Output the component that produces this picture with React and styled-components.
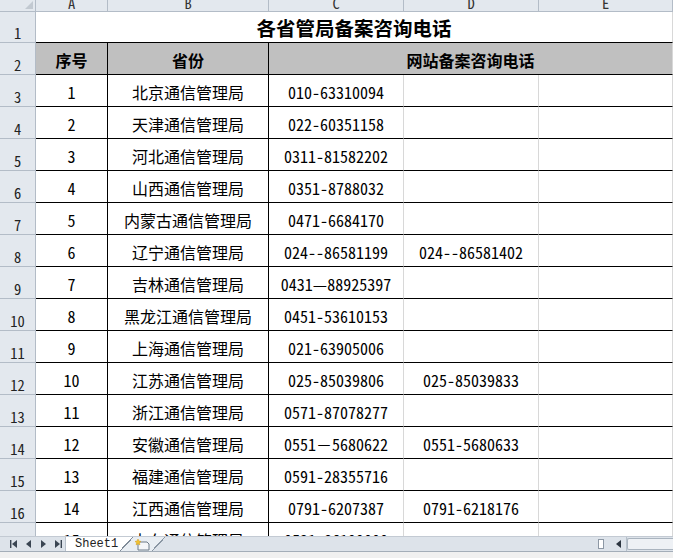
import React from 'react';
import styled, { createGlobalStyle } from 'styled-components';

const Global = createGlobalStyle`
  html, body { margin: 0; padding: 0; background: #fff; }
  body { font-family: "Noto Sans Mono CJK SC", "Noto Sans CJK SC", monospace; color: #000; }
  * { box-sizing: border-box; }
`;

const HEAD_BG = '#e3e8ee';
const HEAD_LINE = '#b3bcc7';
const GRID = '#d8d8d8';
const NEWTAB_BG = '#e9eef3';

const Window = styled.div`
  width: 673px;
  height: 558px;
  display: flex;
  flex-direction: column;
  overflow: hidden;
  background: #fff;
`;

const Sheet = styled.div`
  flex: 0 0 536px;
  overflow: hidden;
  display: grid;
  grid-template-columns: 36px 72px 161px 135px 135px 134px;
  grid-template-rows: 12px 31px;
  grid-auto-rows: 32px;
  align-content: start;
`;

const Corner = styled.div`
  background: ${HEAD_BG};
  border-right: 1px solid ${HEAD_LINE};
  border-bottom: 1px solid ${HEAD_LINE};
  display: flex;
  justify-content: flex-end;
  align-items: flex-end;
  padding: 0 2px 2px 0;
  &::after {
    content: '';
    width: 0;
    height: 0;
    border-left: 8px solid transparent;
    border-bottom: 8px solid #c2c9d1;
  }
`;

const ColHead = styled.div`
  background: ${HEAD_BG};
  border-right: 1px solid ${HEAD_LINE};
  border-bottom: 1px solid ${HEAD_LINE};
  overflow: hidden;
  display: flex;
  justify-content: center;
  align-items: flex-end;
  font-size: 14.5px;
  line-height: 14px;
  color: #333;
  padding-bottom: 1px;
`;

const RowHead = styled.div`
  background: ${HEAD_BG};
  border-right: 1px solid ${HEAD_LINE};
  border-bottom: 1px solid ${HEAD_LINE};
  display: flex;
  justify-content: center;
  align-items: flex-end;
  font-size: 14.5px;
  line-height: 16px;
  color: #222;
  padding-bottom: 1px;
`;

const Cell = styled.div`
  grid-column: span ${(p) => p.$span || 1};
  border-right: 1px solid ${(p) => (p.$strong ? '#000' : GRID)};
  border-bottom: 1px solid #000;
  background: ${(p) => (p.$head ? '#c0c0c0' : '#fff')};
  display: flex;
  justify-content: center;
  align-items: center;
  padding-top: 2px;
  white-space: nowrap;
  font-size: ${(p) => (p.$title ? '19.5px' : '16px')};
  font-weight: ${(p) => (p.$head || p.$title ? 700 : 400)};
  font-family: ${(p) => (p.$head || p.$title ? '"Noto Sans CJK SC", sans-serif' : 'inherit')};
  line-height: 20px;
`;

const TabBar = styled.div`
  flex: 0 0 16px;
  display: flex;
  align-items: stretch;
  background: #dde3ea;
  border-top: 1px solid #c3cad3;
  border-bottom: 1px solid #a3adb8;
`;

const Nav = styled.div`
  width: 66px;
  display: flex;
  align-items: center;
  gap: 6px;
  padding-left: 9px;
  border-right: 1px solid #b8c1cb;
`;

const NavBtn = styled.svg`
  width: 9px;
  height: 8px;
  fill: #3a4552;
`;

const SheetTab = styled.div`
  width: 67px;
  display: flex;
  align-items: center;
  padding-left: 9px;
  font-family: "Liberation Mono", monospace;
  font-size: 12px;
  color: #222;
  background:
    linear-gradient(to top left, ${NEWTAB_BG} calc(50% - 0.6px), #7f8b98 calc(50% - 0.6px), #7f8b98 calc(50% + 0.6px), #fff calc(50% + 0.6px)) right / 13px 100% no-repeat,
    linear-gradient(#fff, #fff) left / 54px 100% no-repeat;
`;

const NewTab = styled.div`
  width: 32px;
  display: flex;
  align-items: center;
  padding-left: 1px;
  background:
    linear-gradient(to top left, transparent calc(50% - 0.6px), #8a96a3 calc(50% - 0.6px), #8a96a3 calc(50% + 0.6px), ${NEWTAB_BG} calc(50% + 0.6px)) right / 13px 100% no-repeat,
    linear-gradient(${NEWTAB_BG}, ${NEWTAB_BG}) left / 19px 100% no-repeat;
`;

const Spacer = styled.div`
  flex: 1;
`;

const Splitter = styled.div`
  width: 6px;
  margin: 2px 6px 2px 0;
  background: #fff;
  border: 1px solid #8d98a5;
`;

const ScrollBtn = styled.div`
  width: 17px;
  display: flex;
  align-items: center;
  justify-content: center;
  border-right: 1px solid #b6c0ca;
`;

const Track = styled.div`
  width: 46px;
  margin: 1px 0;
  background: #eef1f5;
  border: 1px solid #aab4bf;
  border-right: none;
  border-radius: 2px 0 0 2px;
`;

const Footer = styled.div`
  flex: 1;
  background: #f0f0f0;
`;

const rows = [
  [1, '北京通信管理局', '010-63310094', ''],
  [2, '天津通信管理局', '022-60351158', ''],
  [3, '河北通信管理局', '0311-81582202', ''],
  [4, '山西通信管理局', '0351-8788032', ''],
  [5, '内蒙古通信管理局', '0471-6684170', ''],
  [6, '辽宁通信管理局', '024--86581199', '024--86581402'],
  [7, '吉林通信管理局', '0431—88925397', ''],
  [8, '黑龙江通信管理局', '0451-53610153', ''],
  [9, '上海通信管理局', '021-63905006', ''],
  [10, '江苏通信管理局', '025-85039806', '025-85039833'],
  [11, '浙江通信管理局', '0571-87078277', ''],
  [12, '安徽通信管理局', '0551－5680622', '0551-5680633'],
  [13, '福建通信管理局', '0591-28355716', ''],
  [14, '江西通信管理局', '0791-6207387', '0791-6218176'],
  [15, '山东通信管理局', '0531-86199000', ''],
];

const NewSheetIcon = () => (
  <svg width="16" height="13" viewBox="0 0 16 13">
    <path d="M4 4 h9 l2 2 v6 h-11 z" fill="#f4f6f9" stroke="#6d7a88" strokeWidth="1" />
    <path d="M4 1 l0.9 2 2.1 0.4 -1.6 1.4 0.5 2.1 -1.9 -1.1 -1.9 1.1 0.5 -2.1 -1.6 -1.4 2.1 -0.4 z" fill="#f2c230" stroke="#d19a12" strokeWidth="0.5" />
  </svg>
);

export default function App() {
  return (
    <Window>
      <Global />
      <Sheet>
        <Corner />
        {['A', 'B', 'C', 'D', 'E'].map((c) => (
          <ColHead key={c}>{c}</ColHead>
        ))}

        <RowHead>1</RowHead>
        <Cell $span={5} $title>各省管局备案咨询电话</Cell>

        <RowHead>2</RowHead>
        <Cell $head $strong>序号</Cell>
        <Cell $head $strong>省份</Cell>
        <Cell $head $span={3}>网站备案咨询电话</Cell>

        {rows.map(([n, name, p1, p2], i) => (
          <React.Fragment key={n}>
            <RowHead>{i + 3}</RowHead>
            <Cell $strong>{n}</Cell>
            <Cell $strong>{name}</Cell>
            <Cell>{p1}</Cell>
            <Cell>{p2}</Cell>
            <Cell />
          </React.Fragment>
        ))}
      </Sheet>
      <TabBar>
        <Nav>
          <NavBtn viewBox="0 0 9 8"><rect x="1" y="0" width="1.4" height="8" /><path d="M8 0 v8 l-5 -4 z" /></NavBtn>
          <NavBtn viewBox="0 0 9 8"><path d="M7 0 v8 l-5 -4 z" /></NavBtn>
          <NavBtn viewBox="0 0 9 8"><path d="M2 0 v8 l5 -4 z" /></NavBtn>
          <NavBtn viewBox="0 0 9 8"><path d="M1 0 v8 l5 -4 z" /><rect x="6.6" y="0" width="1.4" height="8" /></NavBtn>
        </Nav>
        <SheetTab>Sheet1</SheetTab>
        <NewTab><NewSheetIcon /></NewTab>
        <Spacer />
        <Splitter />
        <ScrollBtn>
          <svg width="5" height="8" viewBox="0 0 5 8"><path d="M5 0 v8 l-5 -4 z" fill="#2c3540" /></svg>
        </ScrollBtn>
        <Track />
      </TabBar>
      <Footer />
    </Window>
  );
}
